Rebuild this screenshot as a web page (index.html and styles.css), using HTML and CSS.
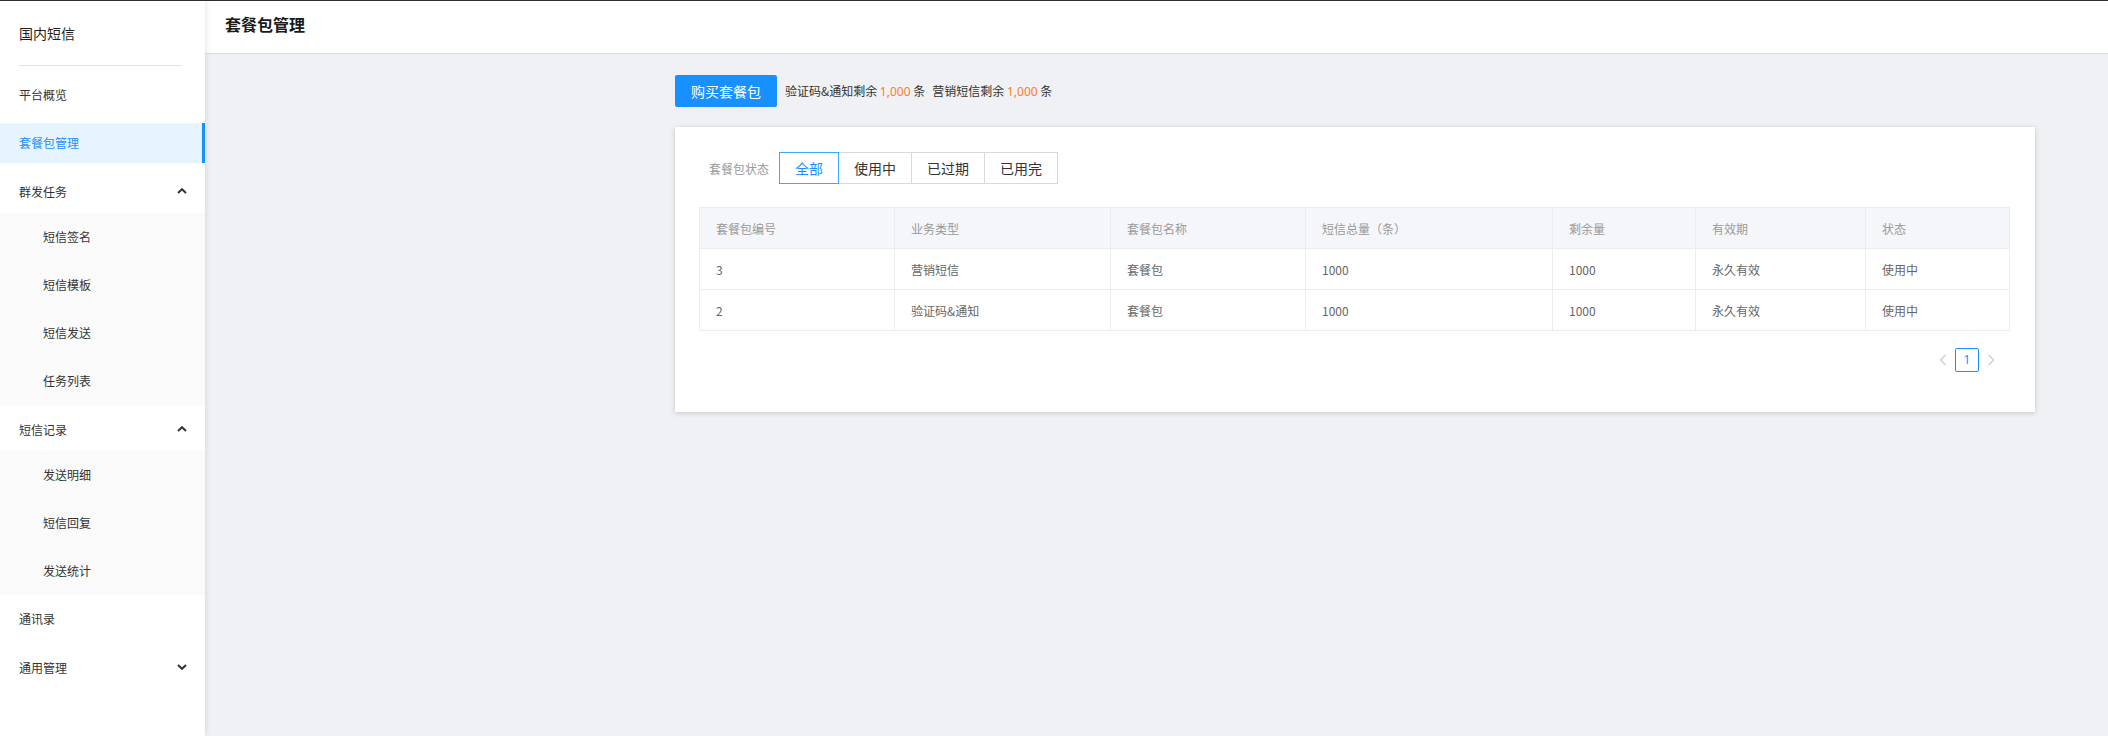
FILE: index.html
```html
<!DOCTYPE html>
<html lang="zh-CN">
<head>
<meta charset="utf-8">
<title>套餐包管理</title>
<link rel="stylesheet" href="styles.css">
</head>
<body>
<div class="app">
  <aside class="sidebar">
    <div class="brand"><span>国内短信</span></div>
    <ul class="menu">
      <li class="item">平台概览</li>
      <li class="item active">套餐包管理</li>
      <li class="group">
        <div class="group-title">群发任务<svg class="chev" width="10" height="6" viewBox="0 0 10 6"><polyline points="1,5 5,1.2 9,5" fill="none" stroke="#333" stroke-width="2"/></svg></div>
        <ul class="sub">
          <li>短信签名</li>
          <li>短信模板</li>
          <li>短信发送</li>
          <li>任务列表</li>
        </ul>
      </li>
      <li class="group">
        <div class="group-title">短信记录<svg class="chev" width="10" height="6" viewBox="0 0 10 6"><polyline points="1,5 5,1.2 9,5" fill="none" stroke="#333" stroke-width="2"/></svg></div>
        <ul class="sub">
          <li>发送明细</li>
          <li>短信回复</li>
          <li>发送统计</li>
        </ul>
      </li>
      <li class="item">通讯录</li>
      <li class="group closed">
        <div class="group-title">通用管理<svg class="chev" width="10" height="6" viewBox="0 0 10 6"><polyline points="1,1 5,4.8 9,1" fill="none" stroke="#333" stroke-width="2"/></svg></div>
      </li>
    </ul>
  </aside>
  <div class="main">
    <header class="topbar"><h1>套餐包管理</h1></header>
    <div class="content">
      <div class="toolbar">
        <button class="btn-primary">购买套餐包</button>
        <span class="quota">验证码&amp;通知剩余 <span class="num">1,000</span> 条</span>
        <span class="quota">营销短信剩余 <span class="num">1,000</span> 条</span>
      </div>
      <div class="card">
        <div class="filter">
          <span class="filter-label">套餐包状态</span>
          <div class="radio-group">
            <span class="radio checked">全部</span>
            <span class="radio">使用中</span>
            <span class="radio">已过期</span>
            <span class="radio">已用完</span>
          </div>
        </div>
        <table class="grid">
          <colgroup>
            <col class="c1"><col class="c2"><col class="c3"><col class="c4"><col class="c5"><col class="c6"><col class="c7">
          </colgroup>
          <thead>
            <tr><th>套餐包编号</th><th>业务类型</th><th>套餐包名称</th><th>短信总量（条）</th><th>剩余量</th><th>有效期</th><th>状态</th></tr>
          </thead>
          <tbody>
            <tr><td>3</td><td>营销短信</td><td>套餐包</td><td>1000</td><td>1000</td><td>永久有效</td><td>使用中</td></tr>
            <tr><td>2</td><td>验证码&amp;通知</td><td>套餐包</td><td>1000</td><td>1000</td><td>永久有效</td><td>使用中</td></tr>
          </tbody>
        </table>
        <div class="pager">
          <span class="pg-arrow"><svg width="8" height="12" viewBox="0 0 8 12"><polyline points="6.5,1 1.5,6 6.5,11" fill="none" stroke="#c8c9cc" stroke-width="1.2"/></svg></span>
          <span class="pg-num">1</span>
          <span class="pg-arrow"><svg width="8" height="12" viewBox="0 0 8 12"><polyline points="1.5,1 6.5,6 1.5,11" fill="none" stroke="#c8c9cc" stroke-width="1.2"/></svg></span>
        </div>
      </div>
    </div>
  </div>
</div>
</body>
</html>
```
FILE: styles.css
```css
* { box-sizing: border-box; }
html, body { margin: 0; padding: 0; }
body {
  font-family: "Noto Sans CJK SC", "Noto Sans", sans-serif;
  font-size: 12px;
  color: #333;
  border-top: 1px solid #2e2e2e;
  background: #f0f1f5;
  height: 736px;
  overflow: hidden;
}
ul { list-style: none; margin: 0; padding: 0; }

.app { display: flex; height: 735px; }

.sidebar {
  width: 205px;
  flex: none;
  background: #fff;
  box-shadow: 2px 0 5px rgba(0, 0, 0, 0.08);
  position: relative;
  z-index: 2;
}
.brand {
  height: 65px;
  padding: 0 23px 0 19px;
}
.brand span {
  display: block;
  height: 65px;
  line-height: 64px;
  font-size: 14px;
  color: #1f1f1f;
  border-bottom: 1px solid #e3e3e3;
}
.menu { padding-top: 9px; display: flex; flex-direction: column; }
.item {
  height: 40px;
  line-height: 40px;
  padding-left: 19px;
  margin-bottom: 8px;
  color: #333;
}
.item.active {
  background: #e6f4ff;
  color: #1890ff;
  border-right: 3px solid #1890ff;
}
.group { margin-bottom: 4px; }
.group.closed { margin-bottom: 0; }
.group-title {
  height: 40px;
  display: flex;
  align-items: center;
  justify-content: space-between;
  padding: 0 18px 0 19px;
  margin-bottom: 2px;
}
.sub { background: #fafafa; padding: 4px 0; display: flex; flex-direction: column; gap: 8px; }
.sub li { height: 40px; line-height: 40px; padding-left: 43px; }

.main { flex: 1; display: flex; flex-direction: column; min-width: 0; }
.topbar {
  height: 53px;
  background: #fff;
  border-bottom: 1px solid #d9dbe1;
  padding-left: 20px;
  display: flex;
  align-items: center;
}
.topbar h1 { margin: 0; font-size: 16px; font-weight: bold; color: #1a1a1a; line-height: 22px; margin-top: -7px; }

.content { padding: 21px 73px 0 470px; }
.toolbar { display: flex; align-items: center; height: 32px; margin-bottom: 20px; }
.btn-primary {
  height: 32px;
  padding: 0 16px;
  border: none;
  border-radius: 2px;
  background: #1890ff;
  color: #fff;
  font-family: inherit;
  font-size: 14px;
  margin-right: 8px;
}
.quota { color: #333; margin-right: 7px; }
.num { color: #ff7d1f; font-family: "Noto Sans", sans-serif; }

.card {
  background: #fff;
  box-shadow: 0 1px 5px rgba(0, 0, 0, 0.18);
  padding: 25px 26px 40px 24px;
}
.filter { display: flex; align-items: center; padding-left: 10px; margin-bottom: 23px; }
.filter-label { color: #999; margin-right: 10px; }
.radio-group { display: flex; }
.radio {
  height: 32px;
  line-height: 30px;
  padding: 0 15px;
  font-size: 14px;
  color: #333;
  border: 1px solid #d9d9d9;
  margin-left: -1px;
  background: #fff;
}
.radio:first-child { margin-left: 0; }
.radio.checked { color: #1890ff; border-color: #40a9ff; position: relative; z-index: 1; }

.grid { width: 100%; border-collapse: collapse; table-layout: fixed; }
.c1 { width: 195px; } .c2 { width: 216px; } .c3 { width: 195px; } .c4 { width: 247px; }
.c5 { width: 143px; } .c6 { width: 170px; } .c7 { width: 144px; }
.grid th, .grid td {
  border: 1px solid #ebedf0;
  height: 41px;
  padding: 0 16px;
  text-align: left;
  font-weight: normal;
  font-size: 12px;
}
.grid th { background: #f5f6f9; color: #999; }
.grid td { color: #666; }

.pager { display: flex; justify-content: flex-end; padding-right: 6px; margin-top: 17px; }
.pg-arrow { width: 24px; height: 24px; display: flex; align-items: center; justify-content: center; }
.pg-num {
  width: 24px; height: 24px;
  border: 1px solid #1890ff;
  border-radius: 2px;
  color: #1890ff;
  text-align: center;
  line-height: 22px;
  font-family: "Noto Sans", sans-serif;
  font-size: 12px;
}
```
